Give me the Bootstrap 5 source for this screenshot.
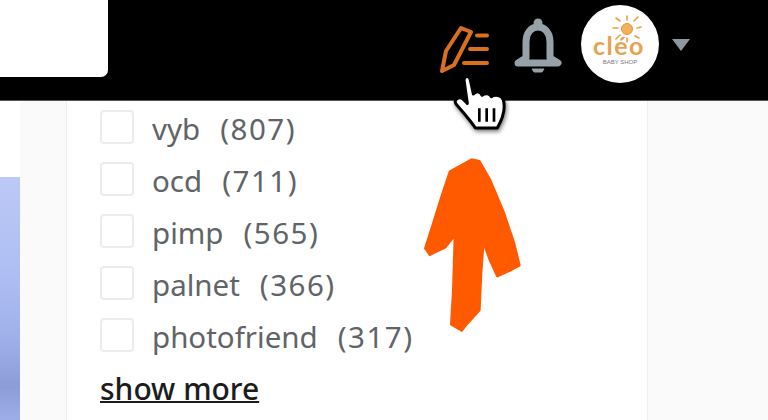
<!DOCTYPE html>
<html lang="en">
<head>
  <meta charset="UTF-8">
  <meta name="viewport" content="width=device-width, initial-scale=1.0">
  <title>Filters</title>
  <link rel="stylesheet" href="https://cdn.jsdelivr.net/npm/bootstrap@5.3.3/dist/css/bootstrap.min.css">
  <style>
    html, body {
      height: 420px;
      overflow: hidden;
    }
    body {
      font-family: "Noto Sans", sans-serif;
      background: #fafafa;
    }
    .topbar {
      height: 101px;
      background: #000;
      border-bottom: 1px solid #555;
    }
    .searchbox {
      width: 108px;
      height: 77px;
      background: #fff;
      border-bottom-right-radius: 7px;
    }
    .topicons {
      padding-right: 78px;
      padding-top: 5px;
    }
    .pen-icon { width: 50px; height: 50px; margin-top: 19px; margin-right: 24px; }
    .bell-icon { width: 48px; height: 56px; margin-top: 13px; margin-right: 19px; }
    .avatar-logo { width: 78px; height: 78px; }
    .caret-shape {
      width: 0;
      height: 0;
      margin-left: 13px;
      margin-top: 34px;
      border-left: 9px solid transparent;
      border-right: 9px solid transparent;
      border-top: 12px solid #8e979e;
    }
    .sidecol {
      width: 66px;
    }
    .stripe {
      width: 20px;
    }
    .stripe-white {
      height: 76px;
      background: #fff;
    }
    .stripe-blue {
      height: 244px;
      background: linear-gradient(180deg, #bcc9f6 0%, #aebef3 40%, #a0b1ea 65%, #8b9cd8 86%, #9eafe8 100%);
    }
    .filterpanel {
      width: 582px;
      height: 320px;
      background: #fff;
      border-left: 1px solid #efefef;
      border-right: 1px solid #efefef;
      padding: 9px 0 0 33px;
    }
    .filter-row {
      height: 52px;
      gap: 18px;
      font-size: 29.5px;
      line-height: 40px;
      color: #606468;
    }
    .tick-box {
      width: 34px;
      height: 34px;
      border: 2px solid #ececec;
      border-radius: 4px;
      background: #fff;
    }
    .filter-name {
      margin-top: -1px;
      white-space: nowrap;
    }
    .filter-count {
      margin-left: 20px;
      letter-spacing: 1.5px;
    }
    .show-more {
      display: inline-block;
      font-size: 30px;
      font-weight: 500;
      line-height: 36px;
      color: #1c1c1c;
      margin-top: 1px;
      text-decoration-thickness: 2px;
    }
    .hand-cursor {
      position: absolute;
      left: 450px;
      top: 70px;
      width: 60px;
      height: 65px;
      filter: drop-shadow(1px 2px 2px rgba(0, 0, 0, .55));
    }
    .paint-arrow {
      position: absolute;
      left: 400px;
      top: 140px;
      width: 150px;
      height: 200px;
    }
  </style>
</head>
<body class="position-relative">
  <div class="topbar d-flex justify-content-between align-items-start">
    <div class="searchbox"></div>
    <div class="topicons d-flex align-items-start">
      <svg class="pen-icon" viewBox="0 0 50 50" fill="none" stroke="#d9701f" stroke-width="4" stroke-linecap="round" stroke-linejoin="round">
        <path d="M2 47 L6 27 L21 4 L31 8 L14 41 Z"/>
        <path d="M37 11.5 H47 M30 25 H47 M24 39 H47"/>
      </svg>
      <svg class="bell-icon" viewBox="0 0 48 56" fill="none" stroke="#97a1a8" stroke-width="7" stroke-linejoin="round">
        <circle cx="24" cy="5" r="4.5" fill="#97a1a8" stroke="none"/>
        <path d="M12 40 V24 C12 15 17 9 24 9 C31 9 36 15 36 24 V40 L44 45 H4 Z"/>
        <path d="M18 51 H30 L28 54 H20 Z" fill="#97a1a8" stroke-width="1"/>
      </svg>
      <svg class="avatar-logo" viewBox="0 0 78 78">
        <circle cx="39" cy="39" r="39" fill="#fff"/>
        <g stroke="#eda040" stroke-width="1.6" stroke-linecap="round">
          <path d="M46 15 V11 M53 16 L57 12 M56 23 L60 22 M54 31 L58 33 M39 16 L35 13 M37 23 L32 23 M39 30 L35 34 M46 33 V37"/>
        </g>
        <circle cx="46" cy="24" r="5.5" fill="#f2b25c" stroke="#e8943a" stroke-width="1"/>
        <text x="38" y="50" text-anchor="middle" font-family="Lato, sans-serif" font-size="25" font-weight="700" fill="#e8a24f" letter-spacing="1.5">cléo</text>
        <text x="39" y="59" text-anchor="middle" font-family="Liberation Sans, sans-serif" font-size="6" fill="#777">BABY SHOP</text>
      </svg>
      <div class="caret-shape"></div>
    </div>
  </div>

  <div class="d-flex">
    <div class="sidecol d-flex">
      <div class="stripe">
        <div class="stripe-white"></div>
        <div class="stripe-blue"></div>
      </div>
    </div>
    <div class="filterpanel">
      <div class="filter-row d-flex"><span class="tick-box"></span><span class="filter-name">vyb<span class="filter-count">(807)</span></span></div>
      <div class="filter-row d-flex"><span class="tick-box"></span><span class="filter-name">ocd<span class="filter-count">(711)</span></span></div>
      <div class="filter-row d-flex"><span class="tick-box"></span><span class="filter-name">pimp<span class="filter-count">(565)</span></span></div>
      <div class="filter-row d-flex"><span class="tick-box"></span><span class="filter-name">palnet<span class="filter-count">(366)</span></span></div>
      <div class="filter-row d-flex"><span class="tick-box"></span><span class="filter-name">photofriend<span class="filter-count">(317)</span></span></div>
      <a href="#" class="show-more">show more</a>
    </div>
  </div>

  <svg class="paint-arrow" viewBox="0 0 450 600">
    <path fill="#ff5a00" stroke="#ff5a00" stroke-width="8" stroke-linejoin="round" d="M150 95 L215 59 L238 64 L270 120 L310 215 L342 310 L358 376 L330 391 L292 408 L270 360 L250 305 L243 400 L238 510 L200 552 L185 571 L154 553 L160 450 L165 285 L135 322 L90 344 L76 325 L100 250 L125 170 Z"/>
  </svg>

  <svg class="hand-cursor" viewBox="90 210 180 195">
    <path d="M132 240 C134 226 148 226 151 240 L160 282 C170 272 182 274 186 286 C196 278 210 280 214 290 C226 282 246 286 250 300 C256 320 250 350 240 368 L232 384 L166 384 C152 362 130 338 108 312 C100 300 116 288 128 296 L142 310 Z" fill="#fff" stroke="#000" stroke-width="9" stroke-linejoin="round"/>
    <path d="M178 325 V365 M200 325 V365 M222 325 V365" stroke="#000" stroke-width="8" fill="none"/>
  </svg>

  <script src="https://cdn.jsdelivr.net/npm/bootstrap@5.3.3/dist/js/bootstrap.bundle.min.js"></script>
</body>
</html>
